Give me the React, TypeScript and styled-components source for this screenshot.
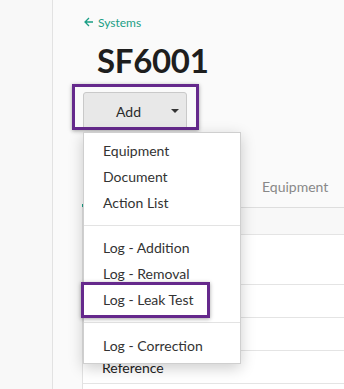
import styled, { createGlobalStyle } from 'styled-components';

const GlobalStyle = createGlobalStyle`
  html, body {
    margin: 0;
    padding: 0;
    background: #fafafa;
    font-family: Lato, "Open Sans", sans-serif;
    overflow: hidden;
  }
`;

const Page = styled.div`
  display: flex;
  height: 389px;
  overflow: hidden;
  background: #fafafa;
`;

const Sidebar = styled.aside`
  flex: 0 0 52px;
  border-right: 1px solid #e2e2e2;
  background: #f8f8f8;
`;

const Main = styled.main`
  flex: 1;
  min-width: 0;
  overflow: hidden;
  padding: 14px 0 0 29px;
`;

const BackLink = styled.a`
  display: flex;
  align-items: center;
  gap: 4px;
  height: 16px;
  margin-left: 2px;
  font-size: 12px;
  color: #1a9e85;
  text-decoration: none;
`;

const Title = styled.h1`
  margin: 10px 0 0 15px;
  font-size: 33px;
  line-height: 40px;
  font-weight: 700;
  letter-spacing: -0.3px;
  color: #1e1e1e;
`;

const ButtonWrap = styled.div`
  position: relative;
  width: 104px;
  margin: 12px 0 0 1px;

  &::after {
    content: '';
    position: absolute;
    left: -11px;
    top: -8px;
    width: 127px;
    height: 46px;
    box-sizing: border-box;
    border: 3px solid #65298c;
    box-shadow: 0 1px 4px rgba(0, 0, 0, 0.35);
    pointer-events: none;
  }
`;

const AddButton = styled.button`
  display: flex;
  align-items: center;
  gap: 30px;
  width: 104px;
  height: 38px;
  padding: 0 9px 0 32px;
  box-sizing: border-box;
  background: #e8e8e8;
  border: 1px solid #c9c9c9;
  border-radius: 3px;
  font-family: inherit;
  font-size: 14px;
  color: #2a2a2a;
`;

const Caret = styled.span`
  width: 0;
  height: 0;
  border-left: 4px solid transparent;
  border-right: 4px solid transparent;
  border-top: 4px solid #333;
`;

const Menu = styled.ul`
  position: absolute;
  top: 40px;
  left: 0;
  z-index: 5;
  width: 158px;
  margin: 0;
  padding: 5px 0 4px;
  list-style: none;
  background: #fff;
  border: 1px solid #cfcfcf;
  box-shadow: 0 4px 14px rgba(0, 0, 0, 0.2);
  box-sizing: border-box;
`;

const MenuItem = styled.li<{ $marked?: boolean }>`
  position: relative;
  height: 26px;
  line-height: 26px;
  padding-left: 19px;
  font-size: 14px;
  color: #333;

  ${({ $marked }) => $marked && `
    &::after {
      content: '';
      position: absolute;
      left: -3px;
      top: -5px;
      width: 129px;
      height: 36px;
      box-sizing: border-box;
      border: 3px solid #65298c;
      box-shadow: 0 1px 4px rgba(0, 0, 0, 0.35);
    }
  `}
`;

const Divider = styled.li<{ $after: number }>`
  height: 1px;
  background: #e3e3e3;
  margin: 9px 0 ${({ $after }) => $after}px;
`;

const Tabs = styled.div`
  display: flex;
  margin-top: 37px;
  overflow: hidden;
  border-bottom: 1px solid #dedede;
`;

const Tab = styled.div<{ $active?: boolean }>`
  flex: 0 0 159px;
  height: 40px;
  line-height: 40px;
  padding-left: 21px;
  box-sizing: border-box;
  font-size: 14px;
  color: ${({ $active }) => ($active ? '#1a9e85' : '#888')};
  border-bottom: 3px solid ${({ $active }) => ($active ? '#1a9e85' : 'transparent')};
`;

const Table = styled.div`
  border-left: 1px solid #e2e2e2;
  background: #fff;
`;

const Row = styled.div<{ $head?: boolean; $tall?: boolean }>`
  display: flex;
  align-items: center;
  height: ${({ $head, $tall }) => ($head ? 26 : $tall ? 49 : 32)}px;
  padding-left: 19px;
  font-size: 14px;
  color: #222;
  background: ${({ $head }) => ($head ? '#f8f8f8' : '#fff')};
  border-bottom: 1px solid #e4e4e4;
`;

const BackArrow = () => (
  <svg width="10" height="10" viewBox="0 0 10 10" fill="none" stroke="#1a9e85" strokeWidth="1.3">
    <path d="M9 5H1.5M5 1L1 5l4 4" />
  </svg>
);

const App = () => {
  return (
    <Page>
      <GlobalStyle />
      <Sidebar />
      <Main>
        <BackLink href="#">
          <BackArrow />
          Systems
        </BackLink>
        <Title>SF6001</Title>
        <ButtonWrap>
          <AddButton>
            Add
            <Caret />
          </AddButton>
          <Menu>
            <MenuItem>Equipment</MenuItem>
            <MenuItem>Document</MenuItem>
            <MenuItem>Action List</MenuItem>
            <Divider $after={9} />
            <MenuItem>Log - Addition</MenuItem>
            <MenuItem>Log - Removal</MenuItem>
            <MenuItem $marked>Log - Leak Test</MenuItem>
            <Divider $after={10} />
            <MenuItem>Log - Correction</MenuItem>
          </Menu>
        </ButtonWrap>
        <Tabs>
          <Tab $active />
          <Tab>Equipment</Tab>
        </Tabs>
        <Table>
          <Row $head />
          <Row $tall />
          <Row />
          <Row />
          <Row>Reference</Row>
          <Row />
        </Table>
      </Main>
    </Page>
  );
};

export default App;
